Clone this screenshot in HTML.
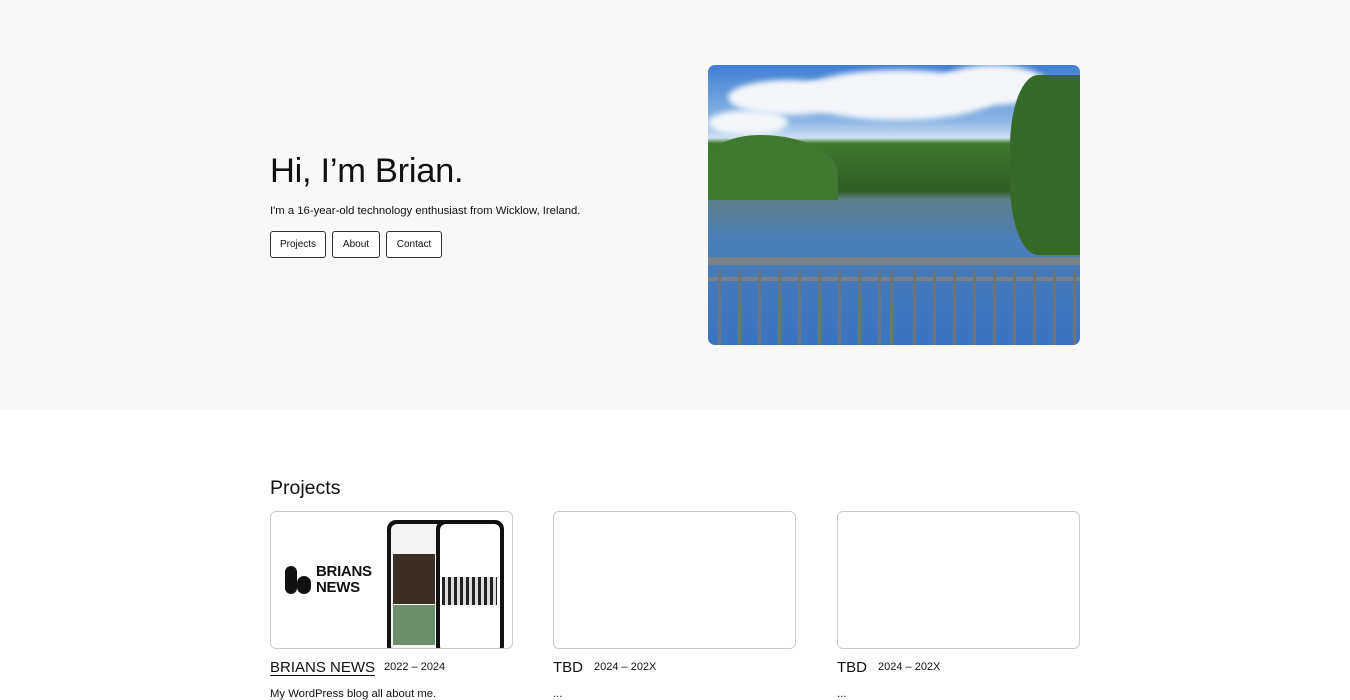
<!DOCTYPE html>
<html><head><meta charset="utf-8"><style>
*{margin:0;padding:0;box-sizing:border-box}
body{width:1350px;height:700px;overflow:hidden;font-family:"Liberation Sans",sans-serif;color:#111;background:#fff}
.hero{position:absolute;left:0;top:0;width:1350px;height:410px;background:#f8f8f8}
h1{position:absolute;left:270px;top:152px;font-size:34.5px;font-weight:400;letter-spacing:-0.3px}
.sub{position:absolute;left:270px;top:205px;font-size:11.3px}
.btn{position:absolute;top:231px;height:27px;border:1px solid #333;border-radius:3px;font-size:10px;line-height:26px;text-align:center;background:#fff}
.photo{position:absolute;left:708px;top:65px;width:372px;height:280px;border-radius:7px;overflow:hidden;
background:linear-gradient(#3f7fd0 0%,#8bb6e6 20%,#cfe0f0 26%,#3e7a2e 28%,#2d5e22 45%,#5d7f88 48%,#4b7fb8 62%,#3a73c0 100%)}
.cloud{position:absolute;background:#f4f6fa;border-radius:50%;filter:blur(3px)}
.rail{position:absolute;left:0;width:372px;background:#7a8288}
.bar{position:absolute;top:205px;width:3px;height:75px;background:#6d747a}
h2{position:absolute;left:270px;top:477px;font-size:19.5px;font-weight:400}
.card{position:absolute;top:511px;width:243px;height:138px;border:1px solid #ccc;border-radius:6px;background:#fff;overflow:hidden}
.t{position:absolute;top:659px;font-size:15px}
.d{position:absolute;top:661px;font-size:11px}
.p{position:absolute;top:688px;font-size:11.3px}
</style></head><body>
<div class="hero"></div>
<h1>Hi, I’m Brian.</h1>
<div class="sub">I'm a 16-year-old technology enthusiast from Wicklow, Ireland.</div>
<div class="btn" style="left:270px;width:56px">Projects</div>
<div class="btn" style="left:332px;width:48px">About</div>
<div class="btn" style="left:386px;width:56px">Contact</div>
<div class="photo">
<div class="cloud" style="left:20px;top:15px;width:120px;height:35px"></div>
<div class="cloud" style="left:90px;top:5px;width:200px;height:50px"></div>
<div class="cloud" style="left:230px;top:0px;width:110px;height:40px"></div>
<div class="cloud" style="left:0px;top:45px;width:80px;height:25px"></div>
<div style="position:absolute;right:0;top:10px;width:70px;height:180px;background:#356a28;border-radius:40% 0 0 40%"></div>
<div style="position:absolute;left:0;top:70px;width:130px;height:65px;background:#3f7a30;border-radius:40% 60% 0 0"></div>
<div class="rail" style="top:192px;height:8px"></div>
<div class="rail" style="top:212px;height:4px"></div>
<div class="bar" style="left:10px"></div><div class="bar" style="left:30px"></div><div class="bar" style="left:50px"></div><div class="bar" style="left:70px"></div><div class="bar" style="left:90px"></div><div class="bar" style="left:110px"></div><div class="bar" style="left:130px"></div><div class="bar" style="left:150px"></div><div class="bar" style="left:170px"></div><div class="bar" style="left:182px"></div><div class="bar" style="left:205px"></div><div class="bar" style="left:225px"></div><div class="bar" style="left:245px"></div><div class="bar" style="left:265px"></div><div class="bar" style="left:285px"></div><div class="bar" style="left:305px"></div><div class="bar" style="left:325px"></div><div class="bar" style="left:345px"></div><div class="bar" style="left:365px"></div>
</div>
<h2>Projects</h2>
<div class="card" style="left:270px">
 <div style="position:absolute;left:14px;top:54px;width:12px;height:28px;background:#111;border-radius:6px"></div>
 <div style="position:absolute;left:26px;top:64px;width:14px;height:18px;background:#111;border-radius:7px"></div>
 <div style="position:absolute;left:45px;top:52px;font-size:15px;font-weight:700;line-height:16px;letter-spacing:-0.3px">BRIANS<br>NEWS</div>
 <div style="position:absolute;left:116px;top:8px;width:64px;height:135px;background:#111;border-radius:9px"><div style="margin:4px;height:128px;background:#f4f4f4;border-radius:6px"><div style="position:absolute;left:6px;top:34px;width:42px;height:50px;background:#3a2e25"></div><div style="position:absolute;left:6px;top:85px;width:42px;height:40px;background:#6d8e6a"></div></div></div>
 <div style="position:absolute;left:165px;top:8px;width:68px;height:135px;background:#111;border-radius:9px"><div style="margin:4px;height:128px;background:#fff;border-radius:6px"><div style="position:absolute;left:6px;top:57px;width:55px;height:28px;background:repeating-linear-gradient(90deg,#222 0 3px,#ddd 3px 6px)"></div></div></div>
</div>
<div class="card" style="left:553px"></div>
<div class="card" style="left:837px"></div>
<div class="t" style="left:270px;text-decoration:underline;text-underline-offset:3px;text-decoration-thickness:1px">BRIANS NEWS</div>
<div class="d" style="left:384px">2022 – 2024</div>
<div class="p" style="left:270px">My WordPress blog all about me.</div>
<div class="t" style="left:553px">TBD</div><div class="d" style="left:594px">2024 – 202X</div><div class="p" style="left:553px">...</div>
<div class="t" style="left:837px">TBD</div><div class="d" style="left:878px">2024 – 202X</div><div class="p" style="left:837px">...</div>
</body></html>
